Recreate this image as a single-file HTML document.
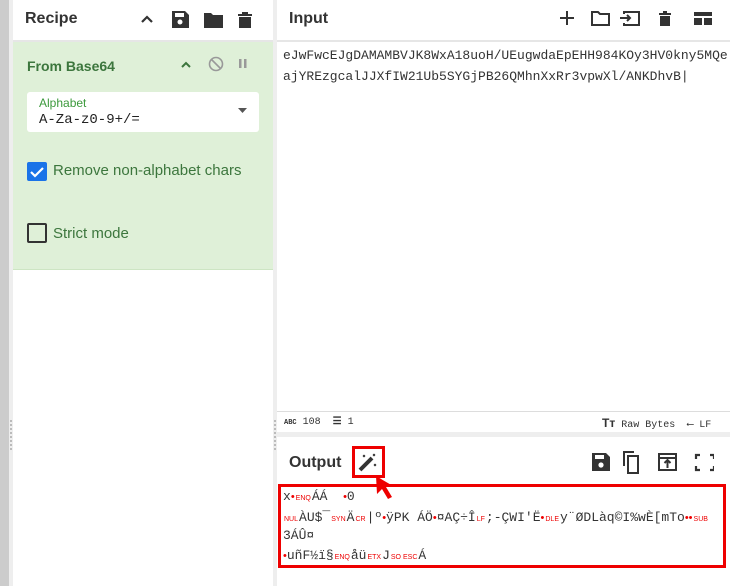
<!DOCTYPE html>
<html><head><style>
*{box-sizing:border-box;margin:0;padding:0}
body{width:730px;height:586px;overflow:hidden;background:#fff;font-family:"Liberation Sans",sans-serif;position:relative}
.abs{position:absolute}
.mono{font-family:"Liberation Mono",monospace}
.hdr{font-weight:bold;font-size:16px;color:#333}
.c{color:#e00;font-size:7px;font-family:"Liberation Sans",sans-serif;padding:0 1px}
.d{color:#e00;font-size:11px;font-family:"Liberation Sans",sans-serif}
.ol{position:absolute;left:283px;width:440px;overflow:hidden;font-family:"Liberation Mono",monospace;font-size:13px;color:#333;white-space:pre;line-height:16px}
</style></head><body>
<div class="abs" style="left:0;top:0;width:9px;height:586px;background:#ccc"></div>
<div class="abs" style="left:9px;top:0;width:4px;height:586px;background:#eee"></div>
<div class="abs" style="left:273px;top:0;width:4px;height:586px;background:#eee"></div>
<!-- recipe -->
<div class="abs" style="left:13px;top:40px;width:260px;height:2px;background:#e6e6e6"></div>
<div class="abs hdr" style="left:25px;top:10px">Recipe</div>
<svg class="abs" style="left:138px;top:8px" width="122" height="22" viewBox="0 0 122 22">
<path d="M4 14 L9 9 L14 14" stroke="#333" stroke-width="2.2" fill="none"/>
<path d="M34 3h13l4 4v13h-17z" fill="#333"/><rect x="37" y="5" width="9" height="4" fill="#fff"/><circle cx="42" cy="14" r="2.5" fill="#fff"/>
<path d="M66 5h7l2 2h10v13h-19z" fill="#333"/>
<path d="M104 4h6v2h4v2h-14v-2h4z M101 9h12v11h-12z" fill="#333"/>
</svg>
<div class="abs" style="left:13px;top:42px;width:260px;height:228px;background:#dff0d8;border-bottom:1px solid #cde5c3"></div>
<div class="abs" style="left:27px;top:58px;font-weight:bold;font-size:14px;color:#3c763d">From Base64</div>
<svg class="abs" style="left:178px;top:55px" width="76" height="20">
<path d="M4 12l4-4 4 4" stroke="#3c763d" stroke-width="2" fill="none"/>
<circle cx="38" cy="9" r="6.5" stroke="#999" stroke-width="1.6" fill="none"/><path d="M33.5 4.5l9 9" stroke="#999" stroke-width="1.6"/>
<rect x="61" y="4" width="2.5" height="9" fill="#999"/><rect x="66" y="4" width="2.5" height="9" fill="#999"/>
</svg>
<div class="abs" style="left:27px;top:92px;width:232px;height:40px;background:#fff;border-radius:3px"></div>
<div class="abs" style="left:39px;top:96px;font-size:12px;color:#3c9a3c">Alphabet</div>
<div class="abs mono" style="left:39px;top:112px;font-size:14px;color:#222">A-Za-z0-9+/=</div>
<svg class="abs" style="left:238px;top:108px" width="10" height="6"><path d="M0 0h9l-4.5 5z" fill="#555"/></svg>
<div class="abs" style="left:27px;top:162px;width:20px;height:19px;background:#1a73e8;border-radius:2px"></div>
<svg class="abs" style="left:27px;top:162px" width="20" height="19"><path d="M4 10l4 4 8-8" stroke="#fff" stroke-width="2.2" fill="none"/></svg>
<div class="abs" style="left:53px;top:162px;font-size:15px;color:#3c763d">Remove non-alphabet chars</div>
<div class="abs" style="left:27px;top:223px;width:20px;height:20px;border:2px solid #333;border-radius:2px"></div>
<div class="abs" style="left:53px;top:225px;font-size:15px;color:#3c763d">Strict mode</div>
<div class="abs" style="left:10px;top:420px;width:2px;height:30px;border-left:2px dotted #bbb"></div>
<div class="abs" style="left:274px;top:420px;width:2px;height:30px;border-left:2px dotted #bbb"></div>
<!-- input -->
<div class="abs" style="left:277px;top:40px;width:453px;height:2px;background:#e6e6e6"></div>
<div class="abs hdr" style="left:289px;top:10px">Input</div>
<svg class="abs" style="left:556px;top:8px" width="160" height="20">
<path d="M11 3v14M4 10h14" stroke="#333" stroke-width="2"/>
<path d="M36 4h6l2 2h9v11h-17z" stroke="#333" stroke-width="2" fill="none"/>
<path d="M68 6v-2h15v13h-15v-2 M64 10h10 M71 7l3 3-3 3" stroke="#333" stroke-width="2" fill="none"/>
<path d="M107 3h4v2h4v2h-12v-2h4z M104 8h10v10h-10z" fill="#333"/>
<path d="M138 4h18v4h-18z M138 10h8v7h-8z M148 10h8v7h-8z" fill="#333"/>
</svg>
<div class="abs mono" style="left:283px;top:45px;font-size:13px;line-height:21px;color:#333;white-space:pre">eJwFwcEJgDAMAMBVJK8WxA18uoH/UEugwdaEpEHH984KOy3HV0kny5MQe
ajYREzgcalJJXfIW21Ub5SYGjPB26QMhnXxRr3vpwXl/ANKDhvB|</div>
<div class="abs" style="left:277px;top:411px;width:453px;height:1px;background:#ddd"></div>
<div class="abs mono" style="left:284px;top:416px;font-size:10px;color:#333;white-space:pre"><b style="font-size:7px">ABC</b> 108  <span style="font-weight:bold">☰</span> 1</div>
<div class="abs mono" style="left:602px;top:416px;font-size:10px;color:#333;white-space:pre"><b style="font-family:Liberation Sans;font-size:12px">Tт</b> Raw Bytes  ⟵ LF</div>
<div class="abs" style="left:277px;top:432px;width:453px;height:5px;background:#eee"></div>
<!-- output -->
<div class="abs hdr" style="left:289px;top:454px">Output</div>
<div class="abs" style="left:352px;top:446px;width:33px;height:32px;border:3px solid #e00"></div>
<svg class="abs" style="left:355px;top:449px" width="27" height="26"><path d="M5 21l12-12" stroke="#333" stroke-width="4"/><path d="M8 6l2 2M10 6l-2 2M18 5l2 2M20 5l-2 2M19 15l2 2M21 15l-2 2" stroke="#333" stroke-width="1"/></svg>
<svg class="abs" style="left:373px;top:474px" width="24" height="32"><path d="M3 2l17 10-7 1 6 10-4 2-6-10-5 5z" fill="#e00"/></svg>
<svg class="abs" style="left:590px;top:450px" width="124" height="24">
<path d="M2 3h14l4 4v14h-18z" fill="#333"/><rect x="5" y="5" width="9" height="4" fill="#fff"/><circle cx="11" cy="15" r="2.6" fill="#fff"/>
<path d="M34 16v-14h10 M38 6h10v17h-10z" stroke="#333" stroke-width="2" fill="none"/>
<path d="M69 4h17v16h-17z M69 8h17" stroke="#333" stroke-width="2" fill="none"/><path d="M77.5 18v-7 M74.5 13l3-3 3 3" stroke="#333" stroke-width="2" fill="none"/>
<path d="M106 9v-4h4 M120 5h4v4 M106 16v4h4 M120 20h4v-4" stroke="#333" stroke-width="2.2" fill="none"/>
</svg>
<div class="abs" style="left:278px;top:484px;width:448px;height:84px;border:3px solid #e00"></div>
<div class="ol" style="top:489px">x<span class="d">•</span><span class="c">ENQ</span>ÁÁ  <span class="d">•</span>0</div>
<div class="ol" style="top:510px"><span class="c">NUL</span>ÀU$¯<span class="c">SYN</span>Ä<span class="c">CR</span>|º<span class="d">•</span>ÿPK ÁÖ<span class="d">•</span>¤AÇ÷Î<span class="c">LF</span>;-ÇWI'Ë<span class="d">•</span><span class="c">DLE</span>y¨ØDLàq©I%wÈ[mTo<span class="d">••</span><span class="c">SUB</span></div>
<div class="ol" style="top:528px">3ÁÛ¤</div>
<div class="ol" style="top:548px"><span class="d">•</span>uñF½ï§<span class="c">ENQ</span>åü<span class="c">ETX</span>J<span class="c">SO</span><span class="c">ESC</span>Á</div>
</body></html>
